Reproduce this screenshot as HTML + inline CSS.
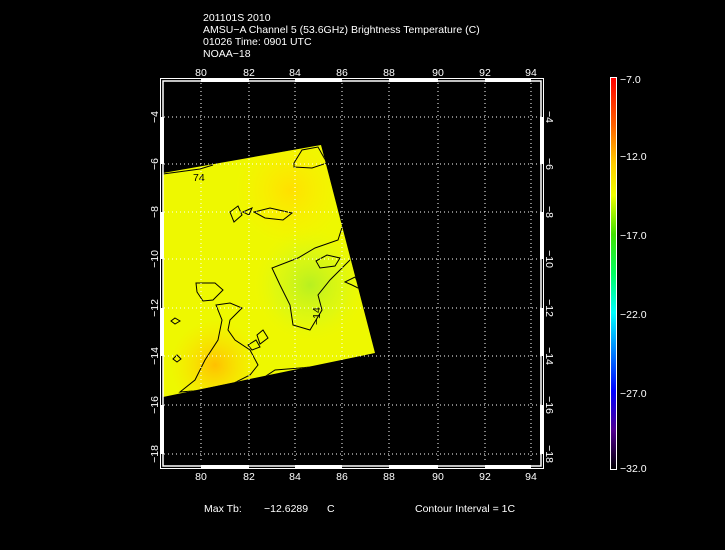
<!DOCTYPE html>
<html><head><meta charset="utf-8"><style>
html,body{margin:0;padding:0;background:#000;width:725px;height:550px;overflow:hidden}
svg{display:block}
text{font-family:"Liberation Sans",sans-serif;fill:#fff;font-size:10.5px}
</style></head><body>
<svg width="725" height="550" viewBox="0 0 725 550" xmlns="http://www.w3.org/2000/svg">
<defs>
<linearGradient id="cb" x1="0" y1="0" x2="0" y2="1">
<stop offset="0" stop-color="#ff0000"/>
<stop offset="0.12" stop-color="#ff6000"/>
<stop offset="0.22" stop-color="#ffcc00"/>
<stop offset="0.3" stop-color="#f0ff00"/>
<stop offset="0.4" stop-color="#40e000"/>
<stop offset="0.5" stop-color="#00ff60"/>
<stop offset="0.6" stop-color="#00ffff"/>
<stop offset="0.7" stop-color="#0080ff"/>
<stop offset="0.8" stop-color="#0000ff"/>
<stop offset="0.9" stop-color="#500090"/>
<stop offset="1" stop-color="#000000"/>
</linearGradient>
<radialGradient id="g1" cx="310" cy="285" r="60" gradientUnits="userSpaceOnUse">
<stop offset="0" stop-color="#b8f020"/><stop offset="0.6" stop-color="#d8f818" stop-opacity="0.6"/><stop offset="1" stop-color="#f0f800" stop-opacity="0"/>
</radialGradient>
<radialGradient id="g2" cx="215" cy="365" r="45" gradientUnits="userSpaceOnUse">
<stop offset="0" stop-color="#ffc000"/><stop offset="1" stop-color="#ffe000" stop-opacity="0"/>
</radialGradient>
<radialGradient id="g3" cx="290" cy="190" r="55" gradientUnits="userSpaceOnUse">
<stop offset="0" stop-color="#ffe000"/><stop offset="1" stop-color="#ffee00" stop-opacity="0"/>
</radialGradient>
<clipPath id="cp"><polygon points="163,173 321,145 375,353 163,397"/></clipPath>
</defs>
<g>
<text x="203" y="21">201101S 2010</text>
<text x="203" y="33">AMSU−A Channel 5 (53.6GHz) Brightness Temperature (C)</text>
<text x="203" y="45">01026 Time: 0901 UTC</text>
<text x="203" y="57">NOAA−18</text>
</g>
<g clip-path="url(#cp)">
<rect x="160" y="140" width="220" height="260" fill="#eef800"/>
<rect x="160" y="140" width="220" height="260" fill="url(#g3)"/>
<rect x="160" y="140" width="220" height="260" fill="url(#g2)"/>
<rect x="160" y="140" width="220" height="260" fill="url(#g1)"/>
<g fill="none" stroke="#000" stroke-width="1">
<path d="M163,174 L200,169 L213,165"/>
<path d="M294,163 L302,150 L318,147 L327,163 L312,168 L294,167 Z"/>
<path d="M230,212 L238,206 L242,215 L234,222 Z"/>
<path d="M243,212 L252,208 L249,215 Z"/>
<path d="M254,212 L270,208 L292,213 L283,220 L265,218 Z"/>
<path d="M345,218 L338,240 L315,248 L298,258 L272,268 L280,285 L290,305 L293,325 L310,330 L322,310 L318,295 L330,280 L350,260"/>
<path d="M316,261 L327,255 L340,258 L335,266 L320,268 Z"/>
<path d="M345,282 L355,277 L362,290 L352,285 Z"/>
<path d="M196,283 L215,283 L223,290 L213,300 L203,301 L197,292 Z"/>
<path d="M216,305 L230,303 L242,308 L230,320 L228,330 L235,340 L250,350 L258,365 L250,375 L230,385 L205,390 L180,392 L195,380 L205,360 L218,340 L222,320 Z"/>
<path d="M175,318 L180,321 L175,324 L171,321 Z"/>
<path d="M257,335 L263,330 L268,338 L260,344 Z"/>
<path d="M248,345 L256,340 L260,347 L252,350 Z"/>
<path d="M177,355 L181,359 L177,362 L173,359 Z"/>
<path d="M260,380 L275,370 L300,368 L320,366"/>
</g>
<text style="fill:#000" font-size="10" transform="translate(320,325) rotate(-90)">−14</text>
<text x="193" y="181" style="fill:#000" font-size="10">74</text>
</g>
<g stroke="#fff" stroke-width="1" stroke-dasharray="1,3">
<path d="M201,83V463M249,83V463M295,83V463M342,83V463M389,83V463M438,83V463M485,83V463M531,83V463"/>
<path d="M164,117H541M164,164H541M164,212H541M164,259H541M164,308H541M164,356H541M164,405H541M164,454H541"/>
</g>
<g fill="none" stroke="#fff">
<rect x="160.5" y="78.5" width="383" height="390" stroke-width="1"/>
<rect x="163" y="81" width="378" height="385" stroke-width="1.5"/>
</g>
<g fill="#fff">
<rect x="201" y="79" width="48" height="3"/><rect x="295" y="79" width="47" height="3"/><rect x="389" y="79" width="49" height="3"/><rect x="485" y="79" width="46" height="3"/>
<rect x="201" y="465" width="48" height="3"/><rect x="295" y="465" width="47" height="3"/><rect x="389" y="465" width="49" height="3"/><rect x="485" y="465" width="46" height="3"/>
<rect x="161" y="117" width="3" height="47"/><rect x="161" y="212" width="3" height="47"/><rect x="161" y="308" width="3" height="48"/><rect x="161" y="405" width="3" height="49"/>
<rect x="540" y="117" width="3" height="47"/><rect x="540" y="212" width="3" height="47"/><rect x="540" y="308" width="3" height="48"/><rect x="540" y="405" width="3" height="49"/>
</g>
<g text-anchor="middle">
<text x="201" y="76">80</text><text x="249" y="76">82</text><text x="295" y="76">84</text><text x="342" y="76">86</text><text x="389" y="76">88</text><text x="438" y="76">90</text><text x="485" y="76">92</text><text x="531" y="76">94</text>
<text x="201" y="480">80</text><text x="249" y="480">82</text><text x="295" y="480">84</text><text x="342" y="480">86</text><text x="389" y="480">88</text><text x="438" y="480">90</text><text x="485" y="480">92</text><text x="531" y="480">94</text>
</g>
<g text-anchor="middle">
<text transform="translate(158,117) rotate(-90)">−4</text><text transform="translate(158,164) rotate(-90)">−6</text><text transform="translate(158,212) rotate(-90)">−8</text><text transform="translate(158,259) rotate(-90)">−10</text><text transform="translate(158,308) rotate(-90)">−12</text><text transform="translate(158,356) rotate(-90)">−14</text><text transform="translate(158,405) rotate(-90)">−16</text><text transform="translate(158,454) rotate(-90)">−18</text>
<text transform="translate(546,117) rotate(90)">−4</text><text transform="translate(546,164) rotate(90)">−6</text><text transform="translate(546,212) rotate(90)">−8</text><text transform="translate(546,259) rotate(90)">−10</text><text transform="translate(546,308) rotate(90)">−12</text><text transform="translate(546,356) rotate(90)">−14</text><text transform="translate(546,405) rotate(90)">−16</text><text transform="translate(546,454) rotate(90)">−18</text>
</g>
<rect x="610.5" y="77.5" width="6" height="392" fill="url(#cb)" stroke="#fff" stroke-width="1"/>
<g>
<text x="620" y="83">−7.0</text><text x="620" y="160">−12.0</text><text x="620" y="239">−17.0</text><text x="620" y="318">−22.0</text><text x="620" y="397">−27.0</text><text x="620" y="472">−32.0</text>
</g>
<text x="204" y="512">Max Tb:</text>
<text x="264" y="512">−12.6289</text>
<text x="327" y="512">C</text>
<text x="415" y="512">Contour Interval = 1C</text>
</svg>
</body></html>
